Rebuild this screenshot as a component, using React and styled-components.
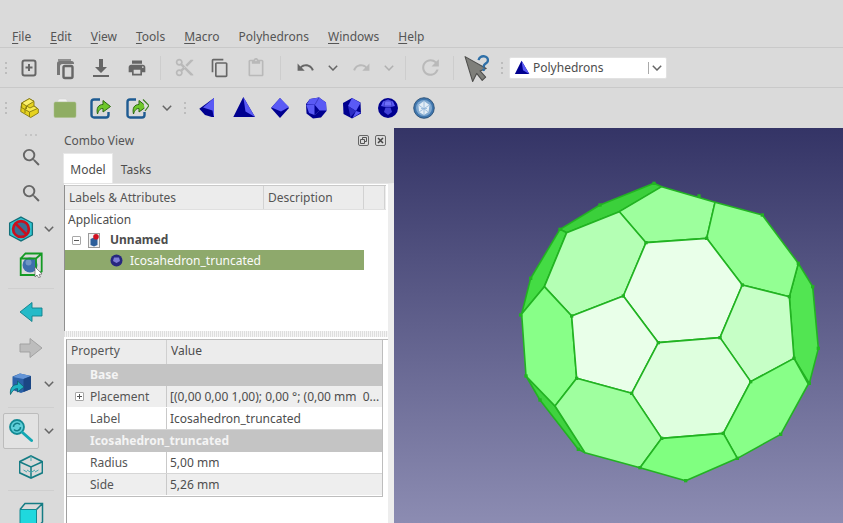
import React from "react";
import styled, { createGlobalStyle } from "styled-components";
import { MdSearch, MdContentCut, MdContentCopy, MdOutlineContentPaste, MdPrint, MdUndo, MdRedo, MdRefresh } from "react-icons/md";

const Global = createGlobalStyle`
  html, body { margin: 0; padding: 0; background: #dadada; overflow: hidden; }
  * { box-sizing: border-box; }
`;

const Window = styled.div`
  width: 843px; height: 523px; overflow: hidden; background: #dadada;
  display: flex; flex-direction: column;
  font-family: "Noto Sans", "Open Sans", sans-serif; font-size: 12px; color: #4d4d4d;
`;
const MenuBar = styled.div`
  height: 48px; flex: none; padding: 26px 0 0 12px; display: flex; gap: 19px;
  line-height: 21px; border-bottom: 1px solid #c9c9c9; color: #555;
  & u { text-underline-offset: 2px; }
`;
const Toolbar = styled.div`
  height: 40px; flex: none; display: flex; align-items: center;
  border-bottom: ${p => (p.$last ? "none" : "1px solid #c9c9c9")};
`;
const Grip = styled.div`
  flex: none; width: ${p => p.$w || 11}px; height: 12px; display: flex; justify-content: center;
  &::after { content: ""; width: 2px; height: 12px; background: repeating-linear-gradient(180deg, #bcbcbc 0 2px, transparent 2px 5px); }
`;
const Cell = styled.div`
  flex: none; width: ${p => p.$w || 36}px; height: 36px; display: flex; align-items: center; justify-content: center;
  color: ${p => (p.$off ? "#b9b9b9" : "#666")};
  & > svg { display: block; flex: none; }
`;
const Divider = styled.div`
  flex: none; width: ${p => p.$w}px; height: 24px; display: flex; justify-content: center;
  &::after { content: ""; width: 1px; background: #cdcdcd; }
`;
const Combo = styled.div`
  flex: none; width: 158px; height: 22px; background: #fff; border-radius: 2px; display: flex; align-items: center;
  padding-left: 4px; gap: 3px; color: #4d4d4d;
  border: 1px solid #e2e2e2;
`;
const ComboArrow = styled.div`
  margin-left: auto; width: 18px; height: 12px; padding-right: 2px; border-left: 1px solid #aaa; display: flex; align-items: center; justify-content: center;
`;
const Main = styled.div`
  flex: 1; min-height: 0; display: flex;
`;
const SideBar = styled.div`
  flex: none; width: 62px; display: flex; flex-direction: column; padding-top: 3px; align-items: stretch;
`;
const SideGrip = styled.div`
  height: 8px; flex: none; display: flex; justify-content: center; align-items: center;
  &::after { content: ""; width: 12px; height: 2px; background: repeating-linear-gradient(90deg, #c4c4c4 0 2px, transparent 2px 5px); }
`;
const SideRow = styled.div`
  height: 36px; flex: none; display: flex; align-items: center;
  justify-content: ${p => (p.$split ? "flex-start" : "center")};
  padding-left: ${p => (p.$split ? "3px" : "0")};
`;
const Pressed = styled(Cell)`
  background: #e2e2e2; border: 1px solid #bcbcbc; border-radius: 2px;
`;
const SideSep = styled.div`
  height: 11px; flex: none; display: flex; align-items: center; padding: 0 8px;
  &::after { content: ""; flex: 1; height: 1px; background: #cfcfcf; }
`;
const Dock = styled.div`
  flex: none; width: 332px; display: flex; flex-direction: column; min-height: 0;
`;
const DockTitle = styled.div`
  height: 25px; flex: none; display: flex; align-items: center; padding: 0 8px 0 2px; color: #555; line-height: 25px;
`;
const DockButtons = styled.div`
  margin-left: auto; display: flex; gap: 6px;
`;
const Tabs = styled.div`
  height: 30px; flex: none; display: flex; align-items: stretch; padding-left: 1px;
`;
const Tab = styled.div`
  width: ${p => p.$w}px; display: flex; align-items: center; justify-content: center; color: #4d4d4d;
  background: ${p => (p.$on ? "#fff" : "transparent")};
  border: ${p => (p.$on ? "1px solid #e8e8e8" : "none")}; border-bottom: none;
  padding-top: 2px;
`;
const Pane = styled.div`
  flex: 1; min-height: 0; margin-left: 2px; background: #fff; display: flex; flex-direction: column;
  border-top: 1px solid #e4e4e4; border-right: 6px solid #ededed;
`;
const Tree = styled.div`
  height: 146px; flex: none; margin-top: 1px; border-left: 1px solid #8f8f8f; display: flex; flex-direction: column;
`;
const TreeHead = styled.div`
  height: 25px; width: 321px; flex: none; display: flex; background: #ececec; border-top: 1px solid #c9c9c9; border-bottom: 1px solid #e0e0e0;
`;
const TreeCol = styled.div`
  width: ${p => p.$w}px; flex: none; padding-left: 4px; line-height: 23px; border-right: 1px solid #d2d2d2; color: #555;
`;
const TreeRow = styled.div`
  height: 20px; flex: none; width: 299px; display: flex; align-items: center; line-height: 20px;
  padding-left: ${p => p.$pad}px; gap: ${p => p.$gap || 0}px; padding-top: ${p => (p.$sel ? 1 : 0)}px;
  background: ${p => (p.$sel ? "#8ea96c" : "transparent")};
  color: ${p => (p.$sel ? "#fbfbfb" : "#4d4d4d")};
  font-weight: ${p => (p.$bold ? 700 : 400)};
`;
const Expander = styled.div`
  flex: none; width: 9px; height: 9px; border: 1px solid #a8a8a8; border-radius: 1px; background: #fff;
  position: relative;
  &::before { content: ""; position: absolute; left: 1px; right: 1px; top: 3px; height: 1px; background: #555; }
  ${p => p.$plus && `&::after { content: ""; position: absolute; top: 1px; bottom: 1px; left: 3px; width: 1px; background: #555; }`}
`;
const Splitter = styled.div`
  height: 6px; flex: none; background: repeating-linear-gradient(90deg, #dedede 0 1px, #f5f5f5 1px 2px);
`;
const PropFrame = styled.div`
  flex: 1; min-height: 0; margin: 2px 0 0 2px; border-left: 1px solid #a0a0a0; border-top: 1px solid #bdbdbd;
`;
const PropTable = styled.div`
  display: flex; flex-direction: column; width: 316px; border-right: 1px solid #bdbdbd; border-bottom: 1px solid #bdbdbd;
`;
const PropHead = styled.div`
  height: 24px; display: flex; background: #ececec; line-height: 22px; color: #555;
`;
const PropName = styled.div`
  flex: none; width: 100px; padding-left: 4px; border-right: 1px solid #d0d0d0; color: #555;
`;
const PropVal = styled.div`
  flex: 1; min-width: 0; padding-left: 4px; white-space: nowrap; overflow: hidden; color: #4d4d4d;
`;
const Section = styled.div`
  height: 22px; line-height: 22px; padding-left: 23px; background: #c4c4c4; color: #f4f4f4; font-weight: 700;
`;
const PropRow = styled.div`
  height: 22px; line-height: 21px; display: flex; background: ${p => (p.$alt ? "#eeeeee" : "#fff")};
  border-bottom: 1px solid ${p => (p.$alt ? "#fff" : "#d6d6d6")};
`;
const Strip = styled.div`
  flex: none; width: 20px; display: flex; align-items: center; justify-content: center; padding: 0 0 1px 4px;
`;
const NameIn = styled.div`
  flex: none; width: 80px; padding-left: 3px; border-right: 1px solid #c9c9c9; color: #555;
`;
const ValIn = styled.div`
  flex: 1; min-width: 0; padding-left: 3px; white-space: nowrap; overflow: hidden; color: #4d4d4d;
`;
const Viewport = styled.div`
  flex: 1; min-width: 0; background: linear-gradient(180deg, #343466 0%, #8c8cb2 100%);
  & > svg { display: block; width: 100%; height: 100%; }
`;

const Chevron = ({ off }) => (
  <svg width="10" height="6" viewBox="0 0 10 6"><path d="M0.8 0.8 L5 5 L9.2 0.8" fill="none" stroke={off ? "#b0b0b0" : "#666"} strokeWidth="1.5" /></svg>
);

const NewDoc = () => (
  <svg width="24" height="24" viewBox="0 0 24 24"><rect x="5.5" y="4.5" width="13" height="15" rx="2" fill="none" stroke="#666" strokeWidth="2" /><path d="M12 8v7M8.5 11.5h7" stroke="#666" strokeWidth="2" /></svg>
);
const SaveCopy = () => (
  <svg width="24" height="24" viewBox="0 0 24 24"><path d="M4 19V7.5A2.5 2.5 0 0 1 6.500 5h12A2.500 2.500 0 0 1 21 7.500V8H9.500A2.500 2.500 0 0 0 7 10.500V19z" fill="#777" /><rect x="10.500" y="10" width="9" height="12" rx="1.500" fill="none" stroke="#666" strokeWidth="2.400" /><path d="M5 4h13" stroke="#777" strokeWidth="1.500" /></svg>
);
const Download = () => (
  <svg width="24" height="24" viewBox="0 0 24 24"><path d="M10 3h4v8h4l-6 6-6-6h4z" fill="#666" /><rect x="4" y="19" width="16" height="2" fill="#666" /></svg>
);
const PartIcon = () => (
  <svg width="24" height="24" viewBox="0 0 24 24">
    <g stroke="#85780e" strokeWidth="0.900" strokeLinejoin="round">
      <path d="M4.700 7 L12.300 2.700 L17 5.300 V10 L21.300 13 V17 L13.700 21.500 L3.700 15.500z" fill="#e6d21f" />
      <path d="M4.700 7 L9.500 10 L17 5.300 L12.300 2.700z" fill="#fbf06a" />
      <path d="M8 13.500 L12.500 16 L20.500 12.500 L17 10 L13 12 L9.500 10z" fill="#f7ea50" />
      <path d="M3.700 11 L8 13.500 V17M9.500 10 V13M12.500 16 V21M4.700 7 V11" fill="none" />
    </g>
  </svg>
);
const Folder = () => (
  <svg width="24" height="24" viewBox="0 0 24 24"><path d="M4 6 L6 3 H13 L15 6z" fill="#f2f2f2" stroke="#d0d0d0" strokeWidth="0.500" /><rect x="1" y="6" width="22" height="15.500" rx="1.500" fill="#8fad63" stroke="#a9bf88" strokeWidth="0.500" /></svg>
);
const Share = ({ double }) => (
  <svg width="24" height="24" viewBox="0 0 24 24">
    <path d="M11 3.500H5A2.500 2.500 0 0 0 2.500 6v13A2.500 2.500 0 0 0 5 21.500h12a2.500 2.500 0 0 0 2.500-2.500v-3" fill="none" stroke="#1e5b92" strokeWidth="2.400" />
    <path d="M8.500 18 C7 12 9.500 8.500 14 8.500 V4.500 L21.500 10.500 L14 16 V12.500 C11.500 12.300 9.800 14 8.500 18z" fill="#6ec72a" stroke="#2c6a12" strokeWidth="1" strokeLinejoin="round" />
    {double && <path d="M18 3.500 L24 9.500 L20 15" fill="#ddd" stroke="#3e7e22" strokeWidth="1.200" />}
  </svg>
);
const WhatsThis = () => (
  <svg width="26" height="26" viewBox="0 0 24 24" style={{ overflow: "visible" }}>
    <path d="M1 1.500 L8 24.500 L11.700 17 L16.800 23.500 L20 20.500 L14.800 14.700 L20.500 12.500z" fill="#7f7f7a" stroke="#4f4f4d" strokeWidth="1" strokeLinejoin="round" />
    <path d="M13.500 4.800 C13.800 1.800 16.500 1 18.300 1.200 C21 1.500 22.500 3.200 22 5.500 C21.500 7.800 18.700 8 18.300 10 V11.500" fill="none" stroke="#2f70a8" strokeWidth="2.200" />
    <circle cx="18.200" cy="13.700" r="1.300" fill="#2f70a8" />
  </svg>
);

const POLY_DARK = "#00008f";
const POLY_LIGHT = "#5a5af5";
const Tetra1 = () => (
  <svg width="24" height="24" viewBox="0 0 24 24"><path d="M18 2 L3.300 12.700 L9 19 L15.700 21 L18 21z" fill={POLY_DARK} /><path d="M18 2 L7 11.500 L16.500 14.500 L17.500 20 L18 20z" fill={POLY_LIGHT} /></svg>
);
const Tetra2 = ({ s = 24 }) => (
  <svg width={s} height={s} viewBox="0 0 24 24"><path d="M11.300 1 L1.300 21 L23 21z" fill={POLY_DARK} /><path d="M11.300 1 L13.500 15.500 L23 21z" fill={POLY_LIGHT} /></svg>
);
const Octa = () => (
  <svg width="24" height="24" viewBox="0 0 24 24"><path d="M12 2 L21 12 L12 22 L3 12z" fill={POLY_DARK} /><path d="M12 2 L21 11 L13 15.500 L3.500 11.500z" fill={POLY_LIGHT} /></svg>
);
const Dodeca = () => (
  <svg width="24" height="24" viewBox="0 0 24 24">
    <path d="M6 3 L15 1.500 L22 6.500 L22.500 15 L17 21.500 L9 22.500 L2.500 17.500 L2 8z" fill={POLY_DARK} />
    <path d="M6 3 L15 1.500 L22 6.500 L22.500 14.500 L15.500 14.500 L10.500 8.500 L2.500 8.500z" fill={POLY_LIGHT} />
    <path d="M2.300 9 L10.500 8.500 L10.500 19 L5 17z" fill={POLY_LIGHT} /><path d="M15 1.500 L11 8.500M15.500 14.500 L10.800 19" stroke="#3030b0" strokeWidth="0.700" />
  </svg>
);
const Icosa = () => (
  <svg width="24" height="24" viewBox="0 0 24 24"><path d="M12 2 L20.500 6.500 L21 17.500 L12 22.500 L3.500 18 L3 7z" fill={POLY_DARK} /><path d="M12 2 L20.500 7 L16 15 L8 10z" fill={POLY_LIGHT} /><path d="M8 10 L16 15 L10.500 21z" fill="#2d2dc4" /><path d="M16 15 L21 16.500 L12.500 22z" fill={POLY_LIGHT} /></svg>
);
const IcosaT = () => (
  <svg width="24" height="24" viewBox="0 0 24 24">
    <circle cx="12" cy="12" r="10" fill={POLY_DARK} />
    <path d="M7 5.500 L12 3.500 L17 5.500 L19 10 L14.500 11 L9.500 11 L5 10z" fill={POLY_LIGHT} />
    <path d="M9.500 11.500 L14.500 11.500 L16 16 L12 19 L8 16z" fill="#4040d8" />
    <path d="M9 5 L15 5 L16 10 L8 10z" fill="#6f6ff8" stroke="#2a2ab0" strokeWidth="0.600" />
  </svg>
);
const Geodesic = () => (
  <svg width="24" height="24" viewBox="0 0 24 24">
    <circle cx="12" cy="12" r="10.300" fill="#3f76ad" stroke="#20466e" strokeWidth="0.800" />
    <circle cx="12" cy="12" r="8" fill="#7fa8d0" />
    <path d="M12 5 L17.500 9 L16.500 16 L12 19 L7 16 L6.500 9z" fill="#e3edf6" />
    <path d="M12 5 V19M6.500 9 L16.500 16M17.500 9 L7 16M9 12.500 H15" stroke="#8fb4d8" strokeWidth="0.800" />
  </svg>
);

const NoShape = () => (
  <svg width="26" height="26" viewBox="0 0 24 24">
    <path d="M12 1 L22.500 6.500 V17.500 L12 23 L1.500 17.500 V6.500z" fill="#2fc6d2" stroke="#14707a" strokeWidth="1.200" />
    <circle cx="12" cy="12" r="7.300" fill="#3a6f94" stroke="#c8101e" strokeWidth="2.500" />
    <path d="M7 7 L17 17" stroke="#c8101e" strokeWidth="2.500" />
  </svg>
);
const SelectCube = () => (
  <svg width="24" height="24" viewBox="0 0 24 24" style={{ overflow: "visible" }}>
    <circle cx="11" cy="12" r="7.500" fill="#3f6fae" /><circle cx="9.500" cy="9.500" r="3" fill="#86a6cf" opacity="0.700" />
    <path d="M1.700 5.500 H17 V22 H1.700z M1.700 5.500 L6.500 0.500 H22.700 V18.500 L17 22 M17 5.500 L22.700 0.500" fill="none" stroke="#149a24" strokeWidth="1.800" />
    <path d="M16 14 L23 21 L20 21.500 L21.500 24 L19.500 24.500 L18 22 L16 24z" fill="#fff" stroke="#666" strokeWidth="0.700" />
  </svg>
);
const ArrowL = () => (
  <svg width="24" height="24" viewBox="0 0 24 24"><path d="M1 12 L13 2.500 V8 H23 V16 H13 V21.500z" fill="#25bac8" stroke="#10808a" strokeWidth="0.900" strokeLinejoin="round" /></svg>
);
const ArrowR = () => (
  <svg width="24" height="24" viewBox="0 0 24 24"><path d="M23 12 L11 2.500 V8 H1 V16 H11 V21.500z" fill="#bdbdbd" stroke="#9d9d9d" strokeWidth="0.900" strokeLinejoin="round" /></svg>
);
const BoxArrow = () => (
  <svg width="24" height="24" viewBox="0 0 24 24">
    <path d="M3.500 4.500 L11 1.500 L22 4 V17 L12 21 L3.500 18z" fill="#2b61a8" />
    <path d="M4 5 L11 1.500 L22 4 L14.500 7z" fill="#6394d6" /><path d="M14.500 7 L22 4 V17 L14.500 20z" fill="#1b4684" />
    <path d="M1.500 22.500 C0.500 15.500 4.500 12.500 8.500 12.500 V9 L15 15 L8.500 20 V16.500 C6 16.500 3.500 18.500 1.500 22.500z" fill="#20b3c2" stroke="#0e5f6b" strokeWidth="0.800" />
  </svg>
);
const FitSel = () => (
  <svg width="24" height="24" viewBox="0 0 24 24">
    <circle cx="8" cy="8" r="7" fill="#5fd0da" stroke="#138a94" strokeWidth="1.800" />
    <path d="M4.500 8 A3.700 3.700 0 0 1 11 5.500 M11.500 8 A3.700 3.700 0 0 1 5 10.500" fill="none" stroke="#137f8a" strokeWidth="1.500" />
    <path d="M13.500 13.500 L22.500 21.500" stroke="#13a8b4" strokeWidth="3" strokeLinecap="round" />
  </svg>
);
const IsoCube = () => (
  <svg width="24" height="24" viewBox="0 0 24 24">
    <path d="M12 1 L23.500 6.700 V17.700 L12 23 L0.500 17.700 V6.700z" fill="none" stroke="#157c84" strokeWidth="1.800" />
    <path d="M0.500 6.700 L12 12 L23.500 6.700M12 12 V23" fill="none" stroke="#157c84" strokeWidth="1.500" />
    <path d="M12 1 V6M12 17.500 L8 15M12 17.500 L16 15M4.500 15 L8 17M19.500 15 L16 17" stroke="#48a8ae" strokeWidth="1" fill="none" />
  </svg>
);
const FrontCube = () => (
  <svg width="24" height="24" viewBox="0 0 24 24" style={{ overflow: "visible" }}>
    <path d="M1 7.500 H17.500 V26 H1z" fill="#1fd8de" stroke="#128a92" strokeWidth="1" />
    <path d="M1 7.500 L6 1.500 H23.500 V20 L17.500 26 M17.500 7.500 L23.500 1.500" fill="none" stroke="#157c84" strokeWidth="1.500" />
  </svg>
);

const DockBtn = ({ close }) => (
  <svg width="11" height="11" viewBox="0 0 11 11">
    <rect x="0.500" y="0.500" width="10" height="10" rx="1.500" fill="none" stroke="#666" />
    {close ? <path d="M3 3 L8 8M8 3 L3 8" stroke="#444" strokeWidth="1.500" /> : <path d="M2.500 4.500 h4 v4 h-4z M4.500 4 V2.500 h4 v4 H7" fill="none" stroke="#555" />}
  </svg>
);
const DocIcon = () => (
  <svg width="12" height="15" viewBox="0 0 12 15">
    <rect x="0.500" y="0.500" width="11" height="14" fill="#f4f4f4" stroke="#9a9a9a" />
    <path d="M2.500 6 L6 4.500 L9.500 6 V12 L6 13.500 L2.500 12z" fill="#2d5f9b" /><circle cx="8" cy="3.800" r="2.800" fill="#d01020" />
  </svg>
);
const BallIcon = () => (
  <svg width="13" height="13" viewBox="0 0 13 13"><circle cx="6.500" cy="6.500" r="6" fill="#27277f" /><path d="M4 3.500 H9 L10 7 L6.500 9 L3 7z" fill="#7c7cd4" /></svg>
);

const FACES = [
  ["#3bd03b", "170,188 328,125 455,50 432,40 270,105 150,178"],
  ["#44dc44", "103,350 170,188 150,178 62,325 35,432"],
  ["#3fd23f", "48,618 135,708 225,848 205,838 90,690"],
  ["#52e552", "838,380 865,280 908,350 925,535 898,640 852,565"],
  ["#9dff9d", "328,125 455,50 615,97 590,205 408,218"],
  ["#93ff93", "615,97 757,135 865,280 838,380 697,345 590,205"],
  ["#b4ffb4", "170,188 328,125 408,218 340,378 185,438 103,350"],
  ["#88ff88", "35,432 103,350 185,438 200,625 135,708 48,618"],
  ["#e9ffe9", "408,218 590,205 697,345 630,503 445,518 340,378"],
  ["#e9ffe9", "185,438 340,378 445,518 365,670 200,625"],
  ["#c6ffc6", "697,345 838,380 852,565 722,635 630,503"],
  ["#deffde", "445,518 630,503 722,635 640,790 455,805 365,670"],
  ["#88ff88", "852,565 895,642 812,793 682,865 640,790 722,635"],
  ["#9fff9f", "200,625 365,670 455,805 390,893 225,848 135,708"],
  ["#80ff80", "455,805 640,790 682,865 527,932 390,893"],
];
const DOTS = "432,40 270,105 150,178 62,325 32,435 48,618 90,690 205,838 390,893 527,932 682,865 812,793 898,640 925,535 908,350 865,280 757,135 567,78 340,378 445,518 630,503 697,345 408,218 590,205 185,438 200,625 365,670 722,635 852,565 838,380 640,790 455,805".split(" ");

const Solid = () => (
  <svg viewBox="-348 -126 1347 1185">
    <g stroke="#22b322" strokeWidth="4.800" strokeLinejoin="round">
      {FACES.map(([fill, points], i) => <polygon key={i} fill={fill} points={points} />)}
    </g>
    <g fill="#22b322">
      {DOTS.map((d, i) => { const [x, y] = d.split(","); return <rect key={i} x={x - 5} y={y - 5} width="10" height="10" />; })}
    </g>
  </svg>
);

export default function App() {
  return (
    <Window>
      <Global />
      <MenuBar>
        <span><u>F</u>ile</span><span><u>E</u>dit</span><span><u>V</u>iew</span><span><u>T</u>ools</span>
        <span><u>M</u>acro</span><span>Polyhedrons</span><span><u>W</u>indows</span><span><u>H</u>elp</span>
      </MenuBar>
      <Toolbar>
        <Grip />
        <Cell><NewDoc /></Cell>
        <Cell><SaveCopy /></Cell>
        <Cell><Download /></Cell>
        <Cell><MdPrint size={20} /></Cell>
        <Divider $w={11} />
        <Cell $off><MdContentCut size={21} /></Cell>
        <Cell><MdContentCopy size={20} /></Cell>
        <Cell $off><MdOutlineContentPaste size={20} /></Cell>
        <Divider $w={13} />
        <Cell><MdUndo size={19} /></Cell>
        <Cell $w={20}><Chevron /></Cell>
        <Cell $off><MdRedo size={19} /></Cell>
        <Cell $w={20}><Chevron off /></Cell>
        <Divider $w={13} />
        <Cell $off><MdRefresh size={25} /></Cell>
        <Divider $w={11} />
        <Cell><WhatsThis /></Cell>
        <Grip $w={14} />
        <Combo>
          <Tetra2 s={16} />
          <span>Polyhedrons</span>
          <ComboArrow><Chevron /></ComboArrow>
        </Combo>
      </Toolbar>
      <Toolbar $last>
        <Grip />
        <Cell><PartIcon /></Cell>
        <Cell><Folder /></Cell>
        <Cell><Share /></Cell>
        <Cell><Share double /></Cell>
        <Cell $w={24}><Chevron /></Cell>
        <Grip />
        <Cell><Tetra1 /></Cell>
        <Cell><Tetra2 /></Cell>
        <Cell><Octa /></Cell>
        <Cell><Dodeca /></Cell>
        <Cell><Icosa /></Cell>
        <Cell><IcosaT /></Cell>
        <Cell><Geodesic /></Cell>
      </Toolbar>
      <Main>
        <SideBar>
          <SideGrip />
          <SideRow><Cell><MdSearch size={23} /></Cell></SideRow>
          <SideRow><Cell><MdSearch size={23} /></Cell></SideRow>
          <SideRow $split><Cell><NoShape /></Cell><Cell $w={20}><Chevron /></Cell></SideRow>
          <SideRow><Cell><SelectCube /></Cell></SideRow>
          <SideSep />
          <SideRow><Cell><ArrowL /></Cell></SideRow>
          <SideRow><Cell><ArrowR /></Cell></SideRow>
          <SideRow $split><Cell><BoxArrow /></Cell><Cell $w={20}><Chevron /></Cell></SideRow>
          <SideSep />
          <SideRow $split><Pressed><FitSel /></Pressed><Cell $w={20}><Chevron /></Cell></SideRow>
          <SideRow><Cell><IsoCube /></Cell></SideRow>
          <SideSep />
          <SideRow><Cell><FrontCube /></Cell></SideRow>
        </SideBar>
        <Dock>
          <DockTitle>
            Combo View
            <DockButtons><DockBtn /><DockBtn close /></DockButtons>
          </DockTitle>
          <Tabs>
            <Tab $on $w={50}>Model</Tab>
            <Tab $w={46}>Tasks</Tab>
          </Tabs>
          <Pane>
            <Tree>
              <TreeHead>
                <TreeCol $w={199}>Labels &amp; Attributes</TreeCol>
                <TreeCol $w={100}>Description</TreeCol>
                <TreeCol $w={21} />
              </TreeHead>
              <TreeRow $pad={3}>Application</TreeRow>
              <TreeRow $pad={7} $gap={7} $bold><Expander /><DocIcon /><span style={{ marginLeft: 3 }}>Unnamed</span></TreeRow>
              <TreeRow $pad={45} $gap={7} $sel><BallIcon />Icosahedron_truncated</TreeRow>
            </Tree>
            <Splitter />
            <PropFrame>
              <PropTable>
                <PropHead><PropName>Property</PropName><PropVal>Value</PropVal></PropHead>
                <Section>Base</Section>
                <PropRow $alt><Strip><Expander $plus /></Strip><NameIn>Placement</NameIn><ValIn>[(0,00 0,00 1,00); 0,00 °; (0,00 mm&nbsp;&nbsp;0...</ValIn></PropRow>
                <PropRow><Strip /><NameIn>Label</NameIn><ValIn>Icosahedron_truncated</ValIn></PropRow>
                <Section>Icosahedron_truncated</Section>
                <PropRow><Strip /><NameIn>Radius</NameIn><ValIn>5,00 mm</ValIn></PropRow>
                <PropRow $alt><Strip /><NameIn>Side</NameIn><ValIn>5,26 mm</ValIn></PropRow>
              </PropTable>
            </PropFrame>
          </Pane>
        </Dock>
        <Viewport><Solid /></Viewport>
      </Main>
    </Window>
  );
}
